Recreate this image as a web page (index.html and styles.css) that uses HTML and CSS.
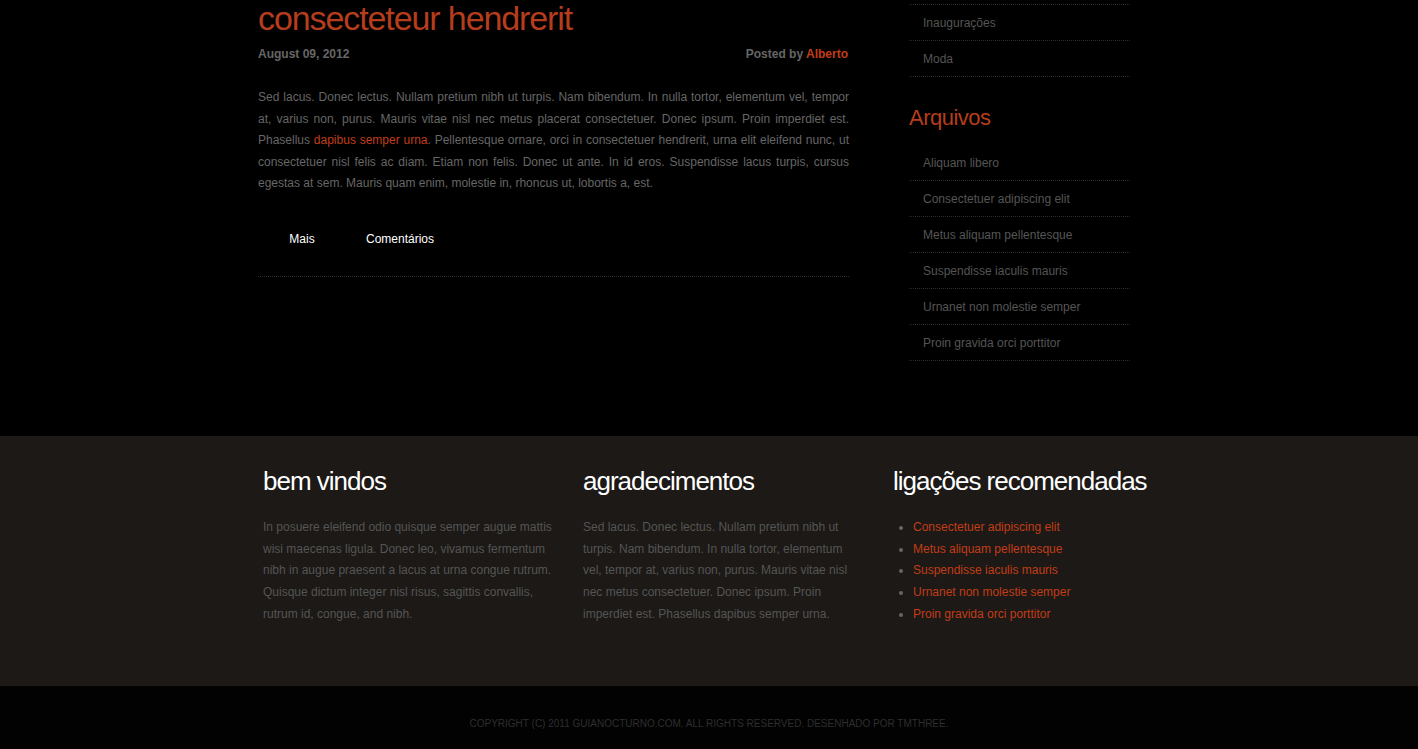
FILE: index.html
```html
<!DOCTYPE html>
<html lang="pt">
<head>
<meta charset="utf-8">
<title>Guia Nocturno</title>
<link rel="stylesheet" href="styles.css">
</head>
<body>
<div class="page">
  <div class="wrap">
    <main class="content">
      <article class="post">
        <h1 class="post-title">consecteteur hendrerit</h1>
        <div class="post-meta">
          <span class="date">August 09, 2012</span>
          <span class="author">Posted by <a href="#">Alberto</a></span>
        </div>
        <p class="post-body">Sed lacus. Donec lectus. Nullam pretium nibh ut turpis. Nam bibendum. In nulla tortor, elementum vel, tempor at, varius non, purus. Mauris vitae nisl nec metus placerat consectetuer. Donec ipsum. Proin imperdiet est. Phasellus <a href="#">dapibus semper urna</a>. Pellentesque ornare, orci in consectetuer hendrerit, urna elit eleifend nunc, ut consectetuer nisl felis ac diam. Etiam non felis. Donec ut ante. In id eros. Suspendisse lacus turpis, cursus egestas at sem. Mauris quam enim, molestie in, rhoncus ut, lobortis a, est.</p>
        <div class="post-actions">
          <a href="#" class="btn">Mais</a>
          <a href="#" class="btn">Comentários</a>
        </div>
      </article>
    </main>
    <aside class="sidebar">
      <ul class="side-list first">
        <li><a href="#">Inaugurações</a></li>
        <li><a href="#">Moda</a></li>
      </ul>
      <h2 class="side-title">Arquivos</h2>
      <ul class="side-list">
        <li><a href="#">Aliquam libero</a></li>
        <li><a href="#">Consectetuer adipiscing elit</a></li>
        <li><a href="#">Metus aliquam pellentesque</a></li>
        <li><a href="#">Suspendisse iaculis mauris</a></li>
        <li><a href="#">Urnanet non molestie semper</a></li>
        <li><a href="#">Proin gravida orci porttitor</a></li>
      </ul>
    </aside>
  </div>
</div>
<footer class="footer">
  <div class="footer-inner">
    <section class="fcol">
      <h3 class="ftitle">bem vindos</h3>
      <p class="ftext">In posuere eleifend odio quisque semper augue mattis wisi maecenas ligula. Donec leo, vivamus fermentum nibh in augue praesent a lacus at urna congue rutrum. Quisque dictum integer nisl risus, sagittis convallis, rutrum id, congue, and nibh.</p>
    </section>
    <section class="fcol">
      <h3 class="ftitle">agradecimentos</h3>
      <p class="ftext narrow">Sed lacus. Donec lectus. Nullam pretium nibh ut turpis. Nam bibendum. In nulla tortor, elementum vel, tempor at, varius non, purus. Mauris vitae nisl nec metus consectetuer. Donec ipsum. Proin imperdiet est. Phasellus dapibus semper urna.</p>
    </section>
    <section class="fcol">
      <h3 class="ftitle">ligações recomendadas</h3>
      <ul class="flinks">
        <li><a href="#">Consectetuer adipiscing elit</a></li>
        <li><a href="#">Metus aliquam pellentesque</a></li>
        <li><a href="#">Suspendisse iaculis mauris</a></li>
        <li><a href="#">Urnanet non molestie semper</a></li>
        <li><a href="#">Proin gravida orci porttitor</a></li>
      </ul>
    </section>
  </div>
</footer>
<div class="copyright">COPYRIGHT (C) 2011 GUIANOCTURNO.COM. ALL RIGHTS RESERVED. DESENHADO POR TMTHREE.</div>
</body>
</html>
```

FILE: styles.css
```css
* { box-sizing: border-box; }
html, body { margin: 0; padding: 0; }
body {
  background: #000;
  font-family: "Liberation Sans", Arial, Helvetica, sans-serif;
  font-size: 12px;
  color: #666;
}
a { text-decoration: none; }

.page { padding-top: 1px; padding-bottom: 75px; }
.wrap {
  width: 902px;
  margin: 0 auto;
  display: flex;
  align-items: flex-start;
}
.content { width: 591px; }
.sidebar { width: 221px; margin-left: 60px; margin-top: -1px; }

.post-title {
  margin: 0;
  font-size: 34px;
  line-height: 34px;
  font-weight: normal;
  letter-spacing: -1.1px;
  color: #b63d1c;
}
.post-meta {
  margin-top: 11px;
  display: flex;
  justify-content: space-between;
  font-weight: bold;
  font-size: 12px;
  line-height: 16px;
  color: #666;
  padding-right: 1px;
}
.post-meta a { color: #c23d18; }
.post-body {
  margin: 25px 0 0;
  line-height: 21.6px;
  text-align: justify;
  color: #666;
}
.post-body a { color: #c23d18; }
.post-actions {
  margin-top: 29px;
  padding-bottom: 22px;
  border-bottom: 1px dotted #2a2a2a;
  display: flex;
  gap: 10px;
}
.btn {
  width: 88px;
  height: 30px;
  display: flex;
  align-items: center;
  justify-content: center;
  color: #fff;
  font-size: 12px;
}

.side-list { list-style: none; margin: 0; padding: 0; }
.side-list.first { margin-top: 4px; border-top: 1px dotted #2a2a2a; }
.side-list li {
  border-bottom: 1px dotted #2a2a2a;
  padding: 10px 0 9px 14px;
  line-height: 16px;
}
.side-list a { color: #555; }
.side-title {
  margin: 28px 0 14px;
  font-size: 22px;
  line-height: 26px;
  font-weight: normal;
  letter-spacing: -0.5px;
  color: #b63d1c;
}

.footer {
  background: #1c1916;
  height: 250px;
  padding-top: 30px;
}
.footer-inner {
  width: 902px;
  margin: 0 auto;
  padding-left: 5px;
  display: grid;
  grid-template-columns: 320px 310px 1fr;
}
.ftitle {
  margin: 0;
  font-size: 26px;
  line-height: 30px;
  font-weight: normal;
  letter-spacing: -1px;
  color: #fff;
}
.ftext {
  margin: 21px 0 0;
  width: 292px;
  line-height: 21.7px;
  color: #555;
}
.ftext.narrow { width: 272px; }
.flinks {
  margin: 21px 0 0;
  padding-left: 20px;
  line-height: 21.7px;
  color: #666;
}
.flinks a { color: #c23d18; }

.copyright {
  height: 63px;
  background: #020202;
  padding-top: 31px;
  line-height: 14px;
  text-align: center;
  font-size: 10px;
  color: #2e2e2e;
}
```
